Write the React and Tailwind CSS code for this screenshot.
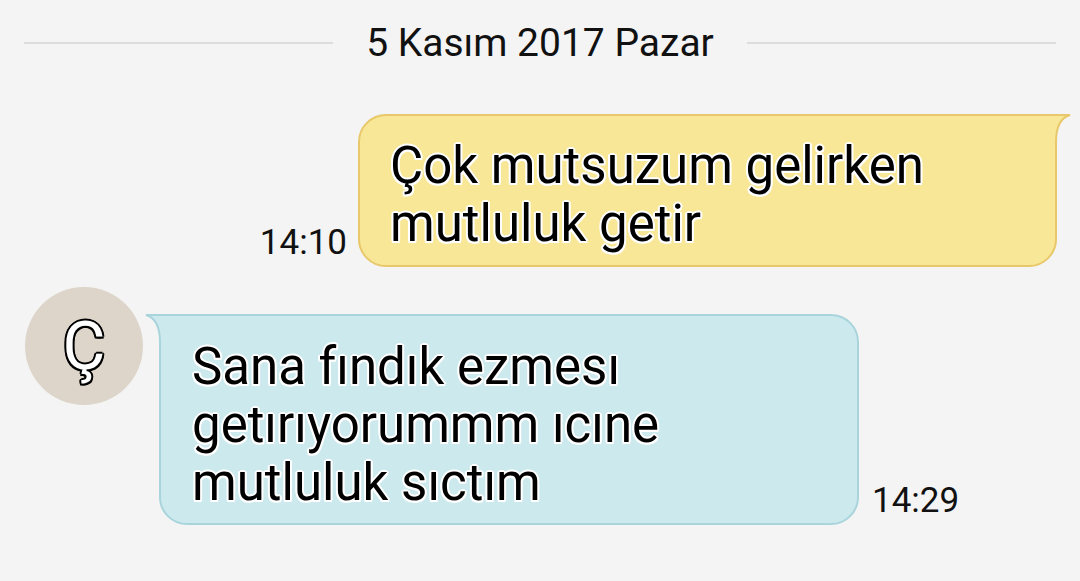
const outline =
  '[text-shadow:2px_0_0_#fff,-2px_0_0_#fff,0_2px_0_#fff,0_-2px_0_#fff,1.5px_1.5px_0_#fff,-1.5px_1.5px_0_#fff,1.5px_-1.5px_0_#fff,-1.5px_-1.5px_0_#fff]';

function DateDivider({ label }) {
  return (
    <div className="flex h-[44px] items-center px-[24px]">
      <div className="h-[2px] flex-1 bg-[#dddddd]" />
      <span className="px-[33px] text-[39px] leading-[44px] text-[#111]">{label}</span>
      <div className="h-[2px] flex-1 bg-[#dddddd]" />
    </div>
  );
}

function OutgoingMessage({ time, children }) {
  return (
    <div className="flex items-end justify-end pr-[23px]">
      <span className="mb-[4px] mr-[11px] text-[35px] leading-[41px] text-[#111]">{time}</span>
      <div className="relative w-[699px] rounded-[28px] rounded-tr-none border-2 border-[#e8c86a] bg-[#f8e796] pb-[12px] pl-[30px] pt-[21px]">
        <p className={`text-[51px] leading-[58px] text-black ${outline}`}>{children}</p>
        <svg className="absolute left-[100%] top-[-2px]" width="18" height="34" viewBox="0 0 18 34">
          <path d="M0 0 H15 C8 3 1 10 1 28 V34 H0 Z" fill="#f8e796" />
          <path d="M0 1 H15 C8 3 1 10 1 28 V34" fill="none" stroke="#e8c86a" strokeWidth="2" />
        </svg>
      </div>
    </div>
  );
}

function IncomingMessage({ time, initial, children }) {
  return (
    <div className="flex items-start pl-[25px]">
      <div className="flex h-[118px] w-[118px] shrink-0 items-center justify-center rounded-full bg-[#ddd5c9]">
        <span className="mt-[2px] text-[66px] leading-none text-white [text-shadow:2px_0_0_#000,-2px_0_0_#000,0_2px_0_#000,0_-2px_0_#000,1.5px_1.5px_0_#000,-1.5px_1.5px_0_#000,1.5px_-1.5px_0_#000,-1.5px_-1.5px_0_#000]">
          {initial}
        </span>
      </div>
      <div className="ml-[16px] mt-[27px] flex items-end">
        <div className="relative w-[700px] rounded-[28px] rounded-tl-none border-2 border-[#a9d4dc] bg-[#cce9ee] pb-[11px] pl-[31px] pt-[22px]">
          <p className={`text-[51px] leading-[58px] text-black ${outline}`}>{children}</p>
          <svg className="absolute right-[100%] top-[-2px]" width="18" height="34" viewBox="0 0 18 34">
            <path d="M18 0 H3 C10 3 17 10 17 28 V34 H18 Z" fill="#cce9ee" />
            <path d="M18 1 H3 C10 3 17 10 17 28 V34" fill="none" stroke="#a9d4dc" strokeWidth="2" />
          </svg>
        </div>
        <span className="mb-[4px] ml-[13px] text-[35px] leading-[41px] text-[#111]">{time}</span>
      </div>
    </div>
  );
}

export default function App() {
  return (
    <div className="h-[581px] w-[1080px] overflow-hidden bg-[#f4f4f4] pt-[21px] font-['Roboto',sans-serif]">
      <DateDivider label="5 Kasım 2017 Pazar" />
      <div className="mt-[49px]">
        <OutgoingMessage time="14:10">
          Çok mutsuzum gelirken
          <br />
          mutluluk getir
        </OutgoingMessage>
      </div>
      <div className="mt-[20px]">
        <IncomingMessage time="14:29" initial="Ç">
          Sana fındık ezmesı
          <br />
          getırıyorummm ıcıne
          <br />
          mutluluk sıctım
        </IncomingMessage>
      </div>
    </div>
  );
}
